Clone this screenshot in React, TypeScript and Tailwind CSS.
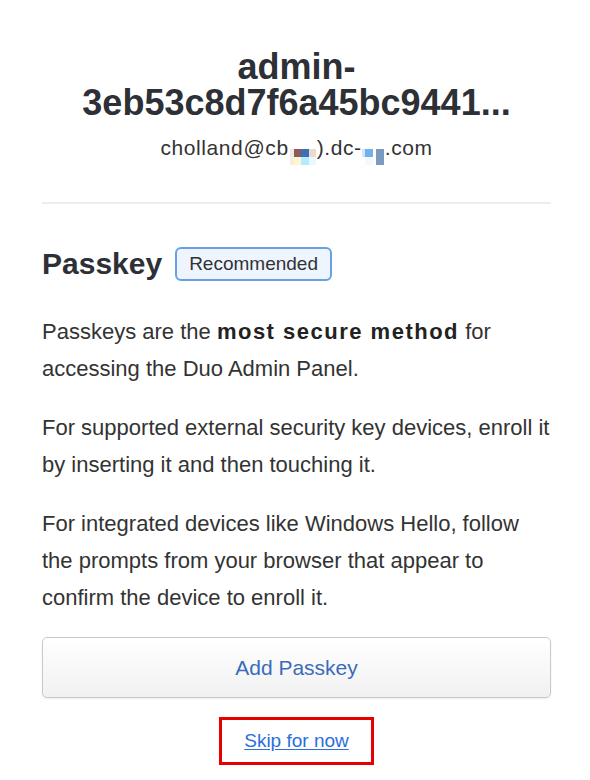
import React from "react";

// Pixelated (redacted) fragments of the email address
function Redacted1() {
  return (
    <span className="inline-grid grid-cols-[4px_7px_8px_7px] grid-rows-[8px_8px] align-[-2px] mx-[1px]">
      <span className="bg-[#efe9e4]" />
      <span className="bg-[#8e5a58]" />
      <span className="bg-[#3c6fb6]" />
      <span className="bg-[#eadccd]" />
      <span className="bg-[#f3efe0]" />
      <span className="bg-[#fff6cf]" />
      <span className="bg-[#b5ecfd]" />
      <span className="bg-[#eaf8ff]" />
    </span>
  );
}

function Redacted2() {
  return (
    <span className="inline-grid grid-cols-[3px_8px_3px_8px] grid-rows-[8px_8px] align-[-2px] mr-[1px]">
      <span className="bg-[#d6e6f5]" />
      <span className="bg-[#70b2ee]" />
      <span className="bg-white" />
      <span className="bg-[#7b9ac0] row-span-2" />
      <span className="bg-white" />
      <span className="bg-[#f3f9ff]" />
      <span className="bg-white" />
    </span>
  );
}

export default function App() {
  return (
    <div className="min-h-screen bg-white font-['Liberation_Sans',Arial,sans-serif] text-[#333]">
      <div className="w-[509px] ml-[42px] pt-[49px] pb-[20px] flex flex-col">
        <h1 className="text-center text-[36px] leading-[36px] font-bold text-[#2d3036]">
          admin-
          <br />
          3eb53c8d7f6a45bc9441...
        </h1>
        <p className="mt-[15px] h-[24px] text-center text-[21px] leading-[24px] tracking-[0.6px] text-[#333]">
          cholland@cb
          <Redacted1 />
          ).dc-
          <Redacted2 />
          .com
        </p>

        <div className="mt-[42px] h-[2px] bg-[#e9eef2]" />

        <div className="mt-[43px] flex items-center gap-[13px]">
          <h2 className="text-[30px] leading-[34px] font-bold text-[#2d3036]">
            Passkey
          </h2>
          <span className="h-[34px] px-[12px] flex items-center rounded-[6px] border-2 border-[#6b9fe3] bg-[#eef5ff] text-[19px] text-[#333]">
            Recommended
          </span>
        </div>

        <div className="mt-[32px] flex flex-col gap-[22px] text-[22px] leading-[37px]">
          <p>
            Passkeys are the{" "}
            <strong className="font-bold tracking-[1.5px] text-[#222]">
              most secure method
            </strong>{" "}
            for accessing the Duo Admin Panel.
          </p>
          <p>
            For supported external security key devices, enroll it by
            inserting it and then touching it.
          </p>
          <p>
            For integrated devices like Windows Hello, follow the prompts from
            your browser that appear to confirm the device to enroll it.
          </p>
        </div>

        <button
          type="button"
          className="mt-[21px] h-[61px] w-full rounded-[5px] border border-[#c9c9c9] bg-gradient-to-b from-white to-[#f1f1f1] text-[21px] text-[#3b6bba] shadow-[0_1px_2px_rgba(0,0,0,0.08)]"
        >
          Add Passkey
        </button>

        <div className="mt-[19px] flex justify-center">
          <div className="w-[155px] h-[48px] border-[3px] border-[#e60000] flex items-center justify-center">
            <a href="#" className="text-[19px] text-[#2a6fdb] underline underline-offset-2">
              Skip for now
            </a>
          </div>
        </div>
      </div>
    </div>
  );
}
